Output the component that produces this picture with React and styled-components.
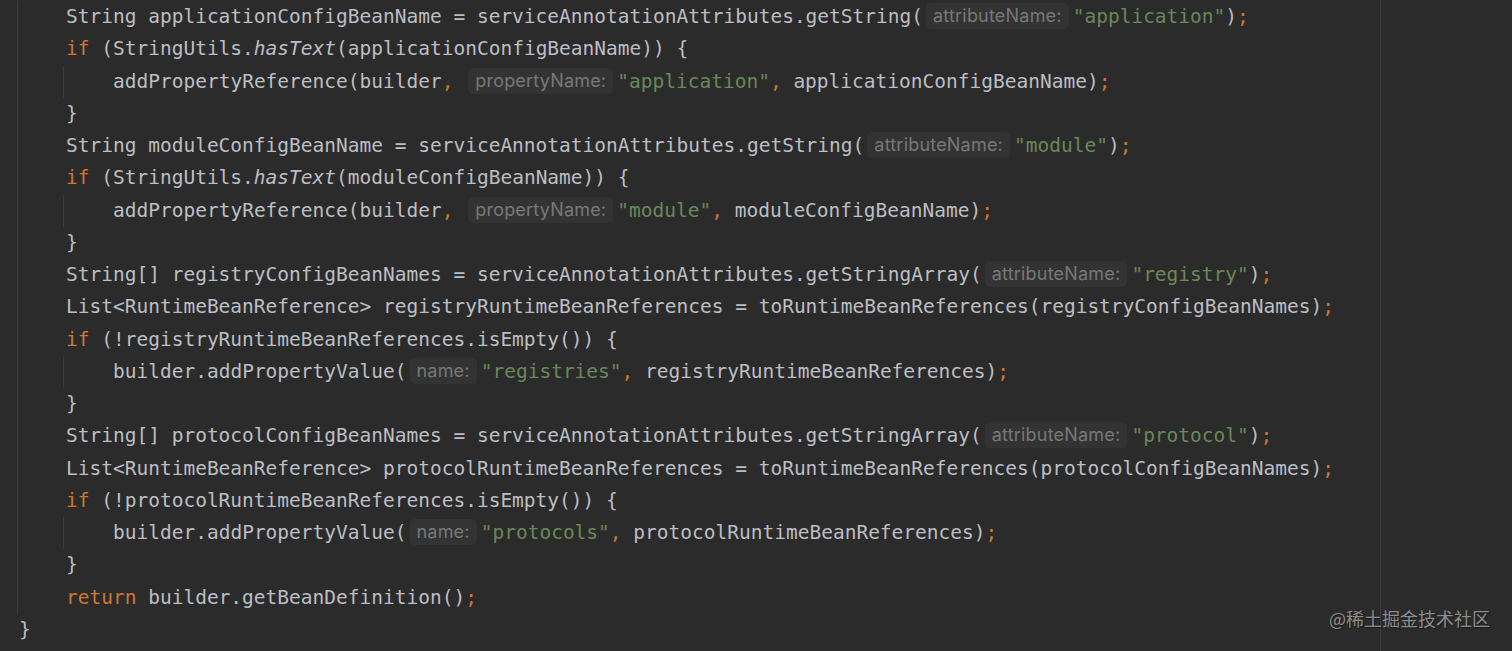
import React from 'react';
import styled, { createGlobalStyle } from 'styled-components';

const Global = createGlobalStyle`
    html, body {
        margin: 0;
        padding: 0;
        background: #2b2b2b;
    }
`;

const Editor = styled.div`
    position: relative;
    width: 1512px;
    height: 651px;
    overflow: hidden;
    box-sizing: border-box;
    padding: 1px 0 0 19px;
    background:
        linear-gradient(to right, transparent 1380px, #3c3c3c 1380px, #3c3c3c 1381px, transparent 1381px),
        #2b2b2b;
    font-family: "DejaVu Sans Mono", "Liberation Mono", monospace;
    font-size: 19.5px;
    color: #bcbec4;
`;

const Block = styled.div`
    margin-left: ${(p) => p.shift}px;
    padding-left: ${(p) => p.pad}px;
    border-left: 1px solid #3a3a3a;
`;

const Line = styled.div`
    height: 32.26px;
    line-height: 32.26px;
    white-space: pre;
`;

const Kw = styled.span`
    color: #cc7832;
`;

const Str = styled.span`
    color: #6a8759;
`;

const Punct = styled.span`
    color: #cc7832;
`;

const Static = styled.span`
    font-style: italic;
`;

const Hint = styled.span`
    display: inline-block;
    margin: 0 4px 0 3px;
    padding: 0 7px;
    height: 26px;
    line-height: 26px;
    vertical-align: 1px;
    border-radius: 5px;
    background: #333333;
    color: #787878;
    font-family: Inter, "Noto Sans", sans-serif;
    font-size: 18px;
    letter-spacing: 0.2px;
`;

const Watermark = styled.div`
    position: absolute;
    right: 22px;
    bottom: 20px;
    color: #8d8d8d;
    font-family: "Noto Sans CJK SC", sans-serif;
    font-size: 18px;
    text-shadow: 1px 1px 1px rgba(0, 0, 0, 0.45);
`;

const Inner = ({ children }) => (
    <Block shift={-3} pad={49}>
        <Line>{children}</Line>
    </Block>
);

const App = () => {
    return (
        <>
            <Global />
            <Editor>
                <Block shift={-2} pad={48}>
                    <Line>String applicationConfigBeanName = serviceAnnotationAttributes.getString(<Hint>attributeName:</Hint><Str>"application"</Str>)<Punct>;</Punct></Line>
                    <Line><Kw>if</Kw> (StringUtils.<Static>hasText</Static>(applicationConfigBeanName)) {'{'}</Line>
                    <Inner>addPropertyReference(builder<Punct>,</Punct> <Hint>propertyName:</Hint><Str>"application"</Str><Punct>,</Punct> applicationConfigBeanName)<Punct>;</Punct></Inner>
                    <Line>{'}'}</Line>
                    <Line>String moduleConfigBeanName = serviceAnnotationAttributes.getString(<Hint>attributeName:</Hint><Str>"module"</Str>)<Punct>;</Punct></Line>
                    <Line><Kw>if</Kw> (StringUtils.<Static>hasText</Static>(moduleConfigBeanName)) {'{'}</Line>
                    <Inner>addPropertyReference(builder<Punct>,</Punct> <Hint>propertyName:</Hint><Str>"module"</Str><Punct>,</Punct> moduleConfigBeanName)<Punct>;</Punct></Inner>
                    <Line>{'}'}</Line>
                    <Line>String[] registryConfigBeanNames = serviceAnnotationAttributes.getStringArray(<Hint>attributeName:</Hint><Str>"registry"</Str>)<Punct>;</Punct></Line>
                    <Line>List&lt;RuntimeBeanReference&gt; registryRuntimeBeanReferences = toRuntimeBeanReferences(registryConfigBeanNames)<Punct>;</Punct></Line>
                    <Line><Kw>if</Kw> (!registryRuntimeBeanReferences.isEmpty()) {'{'}</Line>
                    <Inner>builder.addPropertyValue(<Hint>name:</Hint><Str>"registries"</Str><Punct>,</Punct> registryRuntimeBeanReferences)<Punct>;</Punct></Inner>
                    <Line>{'}'}</Line>
                    <Line>String[] protocolConfigBeanNames = serviceAnnotationAttributes.getStringArray(<Hint>attributeName:</Hint><Str>"protocol"</Str>)<Punct>;</Punct></Line>
                    <Line>List&lt;RuntimeBeanReference&gt; protocolRuntimeBeanReferences = toRuntimeBeanReferences(protocolConfigBeanNames)<Punct>;</Punct></Line>
                    <Line><Kw>if</Kw> (!protocolRuntimeBeanReferences.isEmpty()) {'{'}</Line>
                    <Inner>builder.addPropertyValue(<Hint>name:</Hint><Str>"protocols"</Str><Punct>,</Punct> protocolRuntimeBeanReferences)<Punct>;</Punct></Inner>
                    <Line>{'}'}</Line>
                    <Line><Kw>return</Kw> builder.getBeanDefinition()<Punct>;</Punct></Line>
                </Block>
                <Line>{'}'}</Line>
                <Watermark>@稀土掘金技术社区</Watermark>
            </Editor>
        </>
    );
};

export default App;
